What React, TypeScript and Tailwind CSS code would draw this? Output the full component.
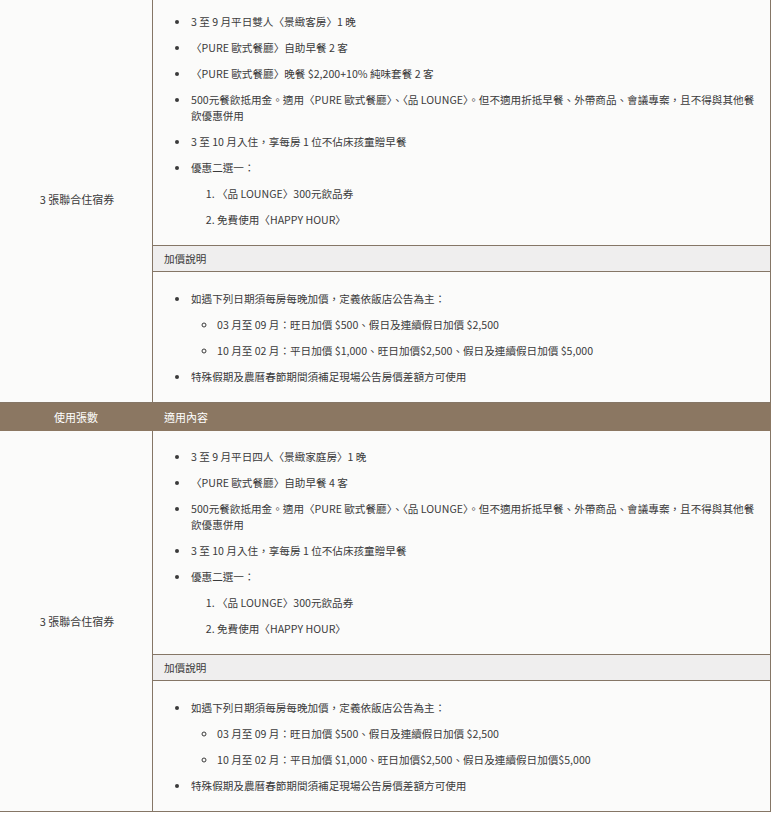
type Item = { text: string; sub?: string[]; ordered?: boolean };

type Block = {
  label: string;
  items: Item[];
  extras: Item[];
};

const extrasA: Item[] = [
  {
    text: '如遇下列日期須每房每晚加價，定義依飯店公告為主：',
    sub: ['03 月至 09 月：旺日加價 $500、假日及連續假日加價 $2,500', '10 月至 02 月：平日加價 $1,000、旺日加價$2,500、假日及連續假日加價 $5,000'],
  },
  { text: '特殊假期及農曆春節期間須補足現場公告房價差額方可使用' },
];

const extrasB: Item[] = [
  {
    text: '如遇下列日期須每房每晚加價，定義依飯店公告為主：',
    sub: ['03 月至 09 月：旺日加價 $500、假日及連續假日加價 $2,500', '10 月至 02 月：平日加價 $1,000、旺日加價$2,500、假日及連續假日加價$5,000'],
  },
  { text: '特殊假期及農曆春節期間須補足現場公告房價差額方可使用' },
];

const blocks: Block[] = [
  {
    label: '3 張聯合住宿券',
    items: [
      { text: '3 至 9 月平日雙人〈景緻客房〉1 晚' },
      { text: '〈PURE 歐式餐廳〉自助早餐 2 客' },
      { text: '〈PURE 歐式餐廳〉晚餐 $2,200+10% 純味套餐 2 客' },
      { text: '500元餐飲抵用金。適用〈PURE 歐式餐廳〉、〈品 LOUNGE〉。但不適用折抵早餐、外帶商品、會議專案，且不得與其他餐飲優惠併用' },
      { text: '3 至 10 月入住，享每房 1 位不佔床孩童贈早餐' },
      { text: '優惠二選一：', ordered: true, sub: ['〈品 LOUNGE〉300元飲品券', '免費使用〈HAPPY HOUR〉'] },
    ],
    extras: extrasA,
  },
  {
    label: '3 張聯合住宿券',
    items: [
      { text: '3 至 9 月平日四人〈景緻家庭房〉1 晚' },
      { text: '〈PURE 歐式餐廳〉自助早餐 4 客' },
      { text: '500元餐飲抵用金。適用〈PURE 歐式餐廳〉、〈品 LOUNGE〉。但不適用折抵早餐、外帶商品、會議專案，且不得與其他餐飲優惠併用' },
      { text: '3 至 10 月入住，享每房 1 位不佔床孩童贈早餐' },
      { text: '優惠二選一：', ordered: true, sub: ['〈品 LOUNGE〉300元飲品券', '免費使用〈HAPPY HOUR〉'] },
    ],
    extras: extrasB,
  },
];

function BulletList({ items, spacing }: { items: Item[]; spacing: string }) {
  return (
    <ul className={`flex list-disc flex-col gap-[10px] pl-[37px] pr-[8px] ${spacing}`}>
      {items.map((item, i) => (
        <li key={i} className="pl-[1px]">
          {item.text}
          {item.sub &&
            (item.ordered ? (
              <ol className="mt-[10px] flex list-decimal flex-col gap-[10px] pl-[26px]">
                {item.sub.map((s, j) => (
                  <li key={j}>{s}</li>
                ))}
              </ol>
            ) : (
              <ul className="mt-[10px] flex list-[circle] flex-col gap-[10px] pl-[26px]">
                {item.sub.map((s, j) => (
                  <li key={j}>{s}</li>
                ))}
              </ul>
            ))}
        </li>
      ))}
    </ul>
  );
}

function VoucherBlock({ block }: { block: Block }) {
  return (
    <div className="flex border-b border-[#857666]">
      <div className="flex w-[152px] shrink-0 items-center justify-center pl-[2px] text-[11px]">{block.label}</div>
      <div className="flex-1 border-x border-[#857666]">
        <BulletList items={block.items} spacing="pt-[18px] pb-[17px]" />
        <div className="border-y border-[#857666] bg-[#efeeee] px-[11px] leading-[25px]">加價說明</div>
        <BulletList items={block.extras} spacing="pt-[19px] pb-[17px]" />
      </div>
    </div>
  );
}

export default function App() {
  return (
    <div
      className="-mt-[4px] w-[771px] bg-[#fbfbfa] text-[10.6px] leading-[16px] text-[#3a3a3a]"
      style={{ fontFamily: '"Noto Sans CJK TC", "Noto Sans", sans-serif' }}
    >
      <VoucherBlock block={blocks[0]} />
      <div className="flex h-[28px] items-center bg-[#8b7762] text-[11px] text-white">
        <div className="w-[152px] shrink-0 text-center">使用張數</div>
        <div className="pl-[12px]">適用內容</div>
      </div>
      <VoucherBlock block={blocks[1]} />
    </div>
  );
}
